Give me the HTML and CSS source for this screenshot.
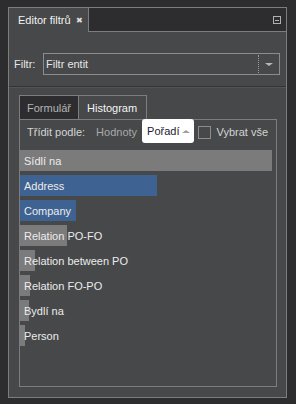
FILE: index.html
```html
<!DOCTYPE html>
<html lang="cs">
<head>
    <meta charset="UTF-8">
    <title>Editor filtrů</title>
    <link rel="stylesheet" href="styles.css">
</head>
<body>

    <div class="panel">
        <div class="panel-header">
            <div class="panel-tab">Editor filtrů <span class="close">&#x2716;</span></div>
            <div class="header-rest">
                <span class="minimize"></span>
            </div>
        </div>

        <div class="filter-area">
            <label class="filter-label">Filtr:</label>
            <div class="combo">
                <span class="combo-text">Filtr entit</span>
                <span class="combo-button"><span class="arrow-down"></span></span>
            </div>
        </div>

        <div class="lower-area">
            <div class="tabs">
                <div class="tab">Formulář</div>
                <div class="tab active">Histogram</div>
            </div>
            <div class="tab-content">
                <div class="toolbar">
                    <span class="sort-label">Třídit podle:</span>
                    <span class="sort-option">Hodnoty</span>
                    <span class="sort-option selected">Pořadí <span class="arrow-up"></span></span>
                    <span class="checkbox"></span>
                    <span class="check-label">Vybrat vše</span>
                </div>
                <div class="bars">
                    <div class="bar-row"><div class="bar" style="width: 252px"></div><span class="bar-label">Sídlí na</span></div>
                    <div class="bar-row"><div class="bar blue" style="width: 137px"></div><span class="bar-label">Address</span></div>
                    <div class="bar-row"><div class="bar blue" style="width: 56px"></div><span class="bar-label">Company</span></div>
                    <div class="bar-row"><div class="bar" style="width: 47px"></div><span class="bar-label">Relation PO-FO</span></div>
                    <div class="bar-row"><div class="bar" style="width: 15px"></div><span class="bar-label">Relation between PO</span></div>
                    <div class="bar-row"><div class="bar" style="width: 10px"></div><span class="bar-label">Relation FO-PO</span></div>
                    <div class="bar-row"><div class="bar" style="width: 9px"></div><span class="bar-label">Bydlí na</span></div>
                    <div class="bar-row"><div class="bar" style="width: 5px"></div><span class="bar-label">Person</span></div>
                </div>
            </div>
        </div>
    </div>

</body>
</html>
```

FILE: styles.css
```css
body {
    margin: 0;
    padding: 7px 9px 7px 8px;
    background-color: #2d2d30;
    font-family: "Liberation Sans", Arial, sans-serif;
    font-size: 11px;
    color: #dcdcdc;
    white-space: nowrap;
}
.panel {
    height: 389px;
    border: 1px solid #7d7d7d;
    background-color: #47484a;
    display: flex;
    flex-direction: column;
}
.panel-header {
    display: flex;
    height: 24px;
    background-color: #2d2d30;
}
.panel-tab {
    width: 80px;
    border-right: 1px solid #7d7d7d;
    background-color: #47484a;
    display: flex;
    align-items: center;
    padding-left: 9px;
    box-sizing: border-box;
    color: #f2f2f2;
}
.close {
    font-size: 8px;
    margin-left: 5px;
    color: #e0e0e0;
}
.header-rest {
    flex: 1;
    border-bottom: 1px solid #7d7d7d;
    display: flex;
    align-items: center;
    justify-content: flex-end;
    padding-right: 5px;
}
.minimize {
    width: 6px;
    height: 6px;
    border: 1px solid #b0b0b0;
    position: relative;
}
.minimize::after {
    content: "";
    position: absolute;
    left: 1px;
    top: 3px;
    width: 4px;
    height: 1px;
    background: #b0b0b0;
}
.filter-area {
    height: 55px;
    display: flex;
    align-items: center;
    padding: 10px 6px 0 5px;
    box-sizing: border-box;
    border-bottom: 1px solid #333436;
}
.filter-label {
    width: 29px;
    color: #e6e6e6;
}
.combo {
    flex: 1;
    height: 22px;
    border: 1px solid #8c8c8c;
    box-sizing: border-box;
    display: flex;
    align-items: center;
}
.combo-text {
    flex: 1;
    padding-left: 2px;
    color: #e6e6e6;
}
.combo-button {
    width: 20px;
    height: 18px;
    border-left: 1px dotted #9a9a9a;
    display: flex;
    align-items: center;
    justify-content: center;
}
.arrow-down {
    border-left: 4px solid transparent;
    border-right: 4px solid transparent;
    border-top: 3px solid #b8b8b8;
}
.lower-area {
    flex: 1;
    border-top: 1px solid #535456;
    padding: 7px 9px 10px 10px;
    display: flex;
    flex-direction: column;
}
.tabs {
    display: flex;
    height: 24px;
}
.tab {
    padding: 0 7px 0 7px;
    border: 1px solid #7d7d7d;
    border-bottom: none;
    background-color: #2d2d30;
    color: #b4b4b4;
    display: flex;
    align-items: center;
}
.tab.active {
    background-color: #47484a;
    color: #f4f4f4;
    border-left: none;
    padding: 0 9px 0 8px;
}
.tab-content {
    flex: 1;
    border: 1px solid #7d7d7d;
}
.toolbar {
    display: flex;
    align-items: center;
    height: 24px;
    padding-left: 7px;
}
.sort-label {
    color: #d4d4d4;
    margin-right: 11px;
}
.sort-option {
    color: #a8a8a8;
    margin-right: 5px;
}
.sort-option.selected {
    background: #ffffff;
    color: #1a2030;
    border-radius: 3px;
    height: 24px;
    display: flex;
    align-items: center;
    padding: 0 4px 0 5px;
    margin-top: -2px;
    margin-right: 4px;
}
.arrow-up {
    margin-left: 2px;
    border-left: 4px solid transparent;
    border-right: 4px solid transparent;
    border-bottom: 3px solid #a0a0a0;
}
.checkbox {
    width: 11px;
    height: 11px;
    border: 1px solid #8c8c8c;
    margin-right: 6px;
}
.check-label {
    color: #d4d4d4;
}
.bars {
    margin-top: 6px;
    display: flex;
    flex-direction: column;
    gap: 4px;
}
.bar-row {
    position: relative;
    height: 21px;
    display: flex;
    align-items: center;
}
.bar {
    position: absolute;
    left: 0;
    top: 0;
    height: 21px;
    background-color: #7b7b7b;
}
.bar.blue {
    background-color: #3e6291;
}
.bar-label {
    position: relative;
    padding-left: 4px;
    color: #ececec;
}
```
